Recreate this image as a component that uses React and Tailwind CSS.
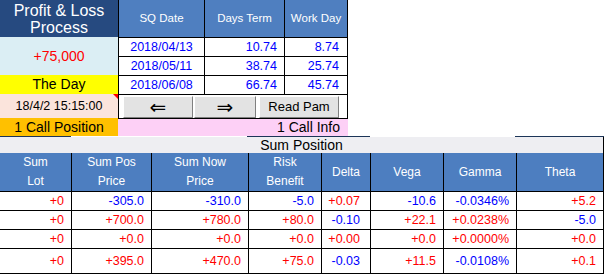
import React from "react";

const dates = [
  { date: "2018/04/13", term: "10.74", work: "8.74" },
  { date: "2018/05/11", term: "38.74", work: "25.74" },
  { date: "2018/06/08", term: "66.74", work: "45.74" },
];

const cols = [
  { label: ["Sum", "Lot"] },
  { label: ["Sum Pos", "Price"] },
  { label: ["Sum Now", "Price"] },
  { label: ["Risk", "Benefit"] },
  { label: ["Delta"], pad: "pr-[10px]" },
  { label: ["Vega"] },
  { label: ["Gamma"] },
  { label: ["Theta"] },
];

const rows = [
  ["+0", "-305.0", "-310.0", "-5.0", "+0.07", "-10.6", "-0.0346%", "+5.2"],
  ["+0", "+700.0", "+780.0", "+80.0", "-0.10", "+22.1", "+0.0238%", "-5.0"],
  ["+0", "+0.0", "+0.0", "+0.0", "+0.00", "+0.0", "+0.0000%", "+0.0"],
  ["+0", "+395.0", "+470.0", "+75.0", "-0.03", "+11.5", "-0.0108%", "+0.1"],
];

const Button = ({ children, className }) => (
  <div
    className={`h-[22px] flex items-center justify-center bg-[#e3e3e3] border border-t-white border-l-white border-b-[#808080] border-r-[#808080] text-black ${className}`}
  >
    {children}
  </div>
);

export default function App() {
  return (
    <div className="w-[608px] h-[274px] bg-white overflow-hidden font-['Liberation_Sans',Arial,sans-serif]">
      {/* Top block */}
      <div className="flex">
        {/* Left column */}
        <div className="w-[118px] flex flex-col">
          <div className="h-[37px] bg-[#264a80] text-white text-[16px] leading-[17px] flex flex-col items-center justify-center">
            <span>Profit &amp; Loss</span>
            <span>Process</span>
          </div>
          <div className="h-[38px] bg-[#dbeef4] text-[#ff0000] text-[14px] flex items-center justify-center">
            +75,000
          </div>
          <div className="h-[19px] bg-[#ffff00] text-black text-[14px] flex items-center justify-center">
            The Day
          </div>
          <div className="relative h-[24px] bg-[#fbe4dc] text-black text-[12.5px] flex items-center justify-center">
            18/4/2 15:15:00
            <span className="absolute top-0 right-0 w-0 h-0 border-t-[5px] border-t-[#ff0000] border-l-[5px] border-l-transparent"></span>
          </div>
          <div className="h-[18px] bg-[#ffc000] text-black text-[14px] flex items-center justify-center">
            1 Call Position
          </div>
        </div>

        {/* Right block */}
        <div className="w-[230px] flex flex-col">
          <div className="h-[37px] flex text-white text-[11.5px]">
            <div className="w-[86px] border-l border-black bg-[#4f7fc0] flex items-center justify-center">SQ Date</div>
            <div className="w-[80px] border-l border-black bg-[#4f7fc0] flex items-center justify-center">Days Term</div>
            <div className="w-[64px] border-l border-r border-black bg-[#4f7fc0] flex items-center justify-center">Work Day</div>
          </div>
          {dates.map((d) => (
            <div key={d.date} className="h-[19px] flex text-[#0000ff] text-[12.5px] border-t border-black">
              <div className="w-[86px] border-l border-black flex items-center justify-center">{d.date}</div>
              <div className="w-[80px] border-l border-black flex items-center justify-end pr-[7px]">{d.term}</div>
              <div className="w-[64px] border-l border-r border-black flex items-center justify-end pr-[8px]">{d.work}</div>
            </div>
          ))}
          <div className="h-[24px] flex items-center border-t border-l border-r border-black pl-[4px] text-[13px]">
            <Button className="w-[70px] text-[20px] font-['DejaVu_Sans',sans-serif]">⇐</Button>
            <Button className="w-[62px] ml-[1px] text-[20px] font-['DejaVu_Sans',sans-serif]">⇒</Button>
            <Button className="w-[80px] ml-[3px]">Read Pam</Button>
          </div>
          <div className="h-[18px] border-t border-black bg-[#fdd0f6] text-black text-[14px] flex items-center justify-end pr-[8px]">
            1 Call Info
          </div>
        </div>
      </div>

      {/* Divider strip */}
      <div className="h-[1px] flex">
        <div className="w-[71px] bg-[#1c3558]"></div>
        <div className="w-[176px]"></div>
        <div className="w-[123px] bg-[#1c3558]"></div>
        <div className="w-[145px]"></div>
        <div className="w-[89px] bg-[#1c3558]"></div>
      </div>

      {/* Sum Position */}
      <div className="w-[604px] h-[16px] bg-[#eeeef2] border-r border-black text-black text-[14px] flex items-center justify-center">
        Sum Position
      </div>

      <div className="w-[604px] grid grid-cols-[71px_80px_97px_73px_49px_73px_73px_88px]">
        {cols.map((c, i) => (
          <div
            key={i}
            className={`h-[38px] bg-[#4d7ec0] text-white text-[12px] leading-[19px] flex flex-col items-center justify-center ${i > 0 ? "border-l border-black" : ""} ${i === cols.length - 1 ? "border-r" : ""}`}
          >
            {c.label.map((l) => (
              <span key={l}>{l}</span>
            ))}
          </div>
        ))}
        {rows.map((r, ri) =>
          r.map((v, ci) => (
            <div
              key={`${ri}-${ci}`}
              className={`${ri === rows.length - 1 ? "h-[26px] border-b" : "h-[19px]"} border-t border-black text-[12.5px] flex items-center justify-end ${cols[ci].pad || "pr-[7px]"} ${v.startsWith("-") ? "text-[#0000ff]" : "text-[#ff0000]"} ${ci > 0 ? "border-l" : ""} ${ci === r.length - 1 ? "border-r" : ""}`}
            >
              {v}
            </div>
          ))
        )}
      </div>
    </div>
  );
}
